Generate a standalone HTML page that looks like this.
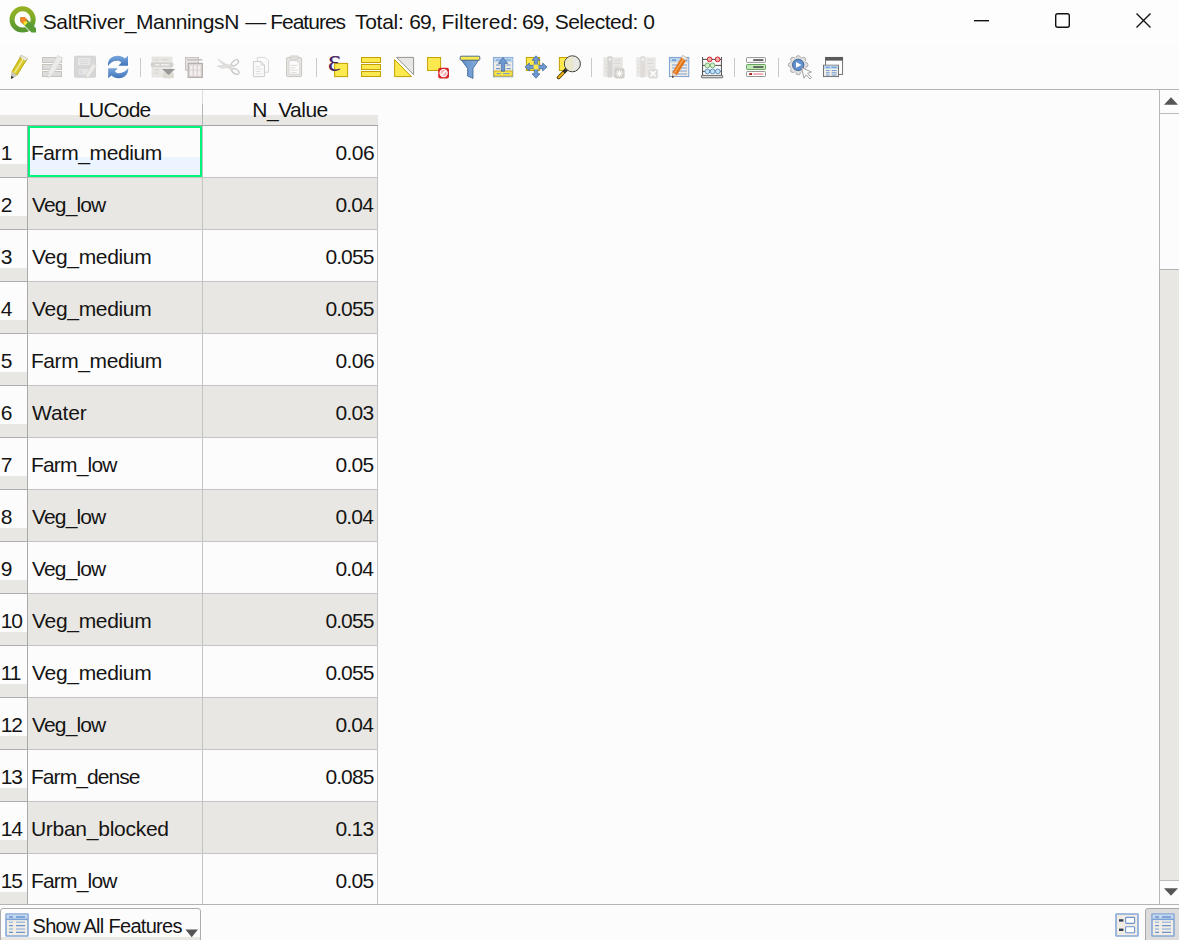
<!DOCTYPE html>
<html lang="en"><head><meta charset="utf-8"><title>SaltRiver_ManningsN</title>
<style>
html,body{margin:0;padding:0;background:#fcfcfc;}
body{width:1179px;height:940px;overflow:hidden;position:relative;font-family:"Liberation Sans",sans-serif;font-size:21px;color:#141414;}
#win{position:absolute;left:0;top:0;width:1179px;height:940px;background:#fcfcfc;overflow:hidden;}
#titlebar{position:absolute;left:0;top:0;width:1179px;height:44px;background:#fdfdfd;}
#title{position:absolute;left:42px;top:7px;width:640px;height:30px;line-height:30px;white-space:nowrap;color:#141414;}
#title span{position:absolute;top:0;}
#toolbar{position:absolute;left:0;top:44px;width:1179px;height:45px;background:#fcfcfc;}
.hline{position:absolute;left:0;width:1179px;height:1px;background:#b4b4b4;}
.ic{position:absolute;}
#table{position:absolute;left:0;top:0;width:1159px;height:904px;overflow:hidden;}
.hdr{position:absolute;top:90px;height:35px;background:linear-gradient(#fcfcfc 0,#fcfcfc 25px,#e9e7e3 25px,#e9e7e3 35px);border-bottom:1px solid #a6a6a6;}
.hdr span{position:absolute;top:5px;line-height:30px;white-space:nowrap;}
.corner{left:0;width:28px;}
.h1{left:28px;width:175px;}
.h1:after{content:"";position:absolute;left:174px;top:0;width:1px;height:35px;background:linear-gradient(#dcdcdc 0,#dcdcdc 14px,#b4b4b4 14px,#b4b4b4 35px);}
.h1 span{left:50.2px;}
.h2{left:203px;width:175px;}
.h2 span{left:49.3px;}
.row{position:absolute;left:0;width:378px;height:52px;}
.row>div{position:absolute;top:0;height:51px;border-bottom:1px solid #c4c4c4;}
.row>.rn{border-bottom-color:#adadad;}
.row span{position:absolute;top:12px;line-height:30px;white-space:nowrap;}
.rn{left:0;width:27px;border-right:1px solid #a9a9a9;background:linear-gradient(#fcfcfc 0,#fcfcfc 38px,#e9e7e3 38px,#e9e7e3 51px);}
.rn span{left:0.8px;letter-spacing:-1.2px;}
.c1{left:28px;width:174px;border-right:1px solid #c4c4c4;background:#fcfcfc;}
.c2{left:203px;width:174px;border-right:1px solid #c4c4c4;background:#fcfcfc;}
.alt .c1,.alt .c2{background:#e9e7e3;}
.c1.sel{background:linear-gradient(#fcfcfc 0,#fcfcfc 31px,#ebf4ff 31px,#ebf4ff 100%);}
.c1.sel:after{content:"";position:absolute;left:0;top:0;width:170px;height:47px;border:2px solid #00f57a;}
#vsb{position:absolute;left:1159px;top:90px;width:20px;height:814px;background:#fcfcfc;border-left:1px solid #b9b9b9;box-sizing:border-box;}
#bottom{position:absolute;left:0;top:905px;width:1179px;height:35px;background:#fcfcfc;}
#thumb{position:absolute;left:-1px;top:179px;width:20px;height:611px;background:#e9e7e3;border-left:1px solid #b4b4b4;border-top:1px solid #b4b4b4;box-sizing:border-box;}
#saf{position:absolute;left:0;top:3px;width:201px;height:40px;box-sizing:border-box;border:1px solid #adadad;border-radius:3px;background:linear-gradient(#fcfcfc 0,#fcfcfc 28px,#e9e7e3 28px);}
#saf span{position:absolute;left:31.5px;top:2px;line-height:30px;white-space:nowrap;}
#tvb{position:absolute;left:1145px;top:3px;width:40px;height:40px;box-sizing:border-box;border:1px solid #a9a9a9;border-radius:3px;background:#dcdcdc;}
.t0{left:2.9px;letter-spacing:-0.4px}
.t1{left:132.4px;letter-spacing:-0.54px}
.t2{left:4.1px;letter-spacing:-0.89px}
.t3{left:132.4px;letter-spacing:-0.81px}
.t4{left:4.1px;letter-spacing:-0.33px}
.t5{left:122.4px;letter-spacing:-0.9px}
.t6{left:4.1px;letter-spacing:-0.13px}
.t7{left:132.4px;letter-spacing:-0.67px}
.t8{left:2.9px;letter-spacing:-0.8px}
.t9{left:132.4px;letter-spacing:-0.67px}
.t10{left:2.9px;letter-spacing:-0.92px}
.t11{left:122.4px;letter-spacing:-0.9px}
.t12{left:2.9px;letter-spacing:-0.26px}
.t13{left:132.4px;letter-spacing:-0.67px}
.h1 span{letter-spacing:-0.8px}.h2 span{letter-spacing:-0.5px}
#saf span{font-size:20px;letter-spacing:-0.7px}
</style></head>
<body>
<div id="win">
<div id="titlebar">
<svg class="ic" style="left:0;top:0" width="1179" height="44" viewBox="0 0 1179 44">
<defs>
<linearGradient id="qg" x1="0" y1="0" x2="0" y2="1"><stop offset="0" stop-color="#93b023"/><stop offset="0.45" stop-color="#7fab28"/><stop offset="0.55" stop-color="#6fa52c"/><stop offset="1" stop-color="#589632"/></linearGradient>
</defs>
<!-- QGIS logo -->
<circle cx="22.6" cy="19.4" r="10.6" fill="none" stroke="url(#qg)" stroke-width="5"/>
<path d="M24.5 26.5 L29 22 L33.5 26.5 L29 31 Z" fill="#fff"/>
<path d="M20.3 17.2 L24.6 17 L36 28.2 L36 32.6 L31.6 32.6 L20.4 21.4 Z" fill="#5a9a32"/>
<path d="M20.3 17.2 L24.6 17 L27.3 19.6 L23.2 24.2 L20.4 21.4 Z" fill="#f0832a"/>
<path d="M23.4 21.6 L26.6 21.2 L27.8 22.4 L25 25.6 L23.6 24.2 Z" fill="#f6e231"/>
<!-- window controls -->
<rect x="974" y="20" width="15" height="1.4" fill="#111"/>
<rect x="1055.7" y="13.7" width="13.6" height="13.6" rx="2" fill="none" stroke="#111" stroke-width="1.4"/>
<path d="M1136.5 13.5 L1150.5 27.5 M1150.5 13.5 L1136.5 27.5" stroke="#111" stroke-width="1.4" fill="none"/>
</svg>
<div id="title"><span style="left:0.7px;letter-spacing:-0.36px">SaltRiver_ManningsN</span> <span style="left:203.3px;letter-spacing:0.0px">—</span> <span style="left:228.2px;letter-spacing:-1.0px">Features</span> <span style="left:313.0px;letter-spacing:-0.28px">Total:</span> <span style="left:367.2px;letter-spacing:-0.9px">69,</span> <span style="left:399.4px;letter-spacing:0.11px">Filtered:</span> <span style="left:479.9px;letter-spacing:-0.8px">69,</span> <span style="left:512.7px;letter-spacing:-0.5px">Selected:</span> <span style="left:601.2px;letter-spacing:0.0px">0</span></div>
</div>
<div id="toolbar">
<svg class="ic" style="left:0;top:0" width="1179" height="45" viewBox="0 44 1179 45">
<defs>
<linearGradient id="bl" x1="0" y1="0" x2="0" y2="1"><stop offset="0" stop-color="#7aa6dc"/><stop offset="1" stop-color="#3f74ba"/></linearGradient>
<linearGradient id="fn" x1="0" y1="0" x2="1" y2="0"><stop offset="0" stop-color="#5c8cc8"/><stop offset="1" stop-color="#8ab0dc"/></linearGradient>
</defs>
<!-- 1 toggle editing pencil -->
<g>
<path d="M21 55 L27.6 58.6 L17.2 75.6 L11 79 L11.6 71.6 Z" fill="#d9c92a"/>
<path d="M21 55 L27.6 58.6 L26 61.2 L19.4 57.6 Z" fill="#ecebe6" stroke="#b9b7b0" stroke-width="0.6"/>
<path d="M14.6 72.6 L23.6 58.4" stroke="#f1eb8c" stroke-width="1.5" fill="none"/><path d="M12.4 71 L21.2 56.6" stroke="#b9a91c" stroke-width="0.9" fill="none"/><path d="M17 75 L26.6 59.6" stroke="#b9a91c" stroke-width="0.9" fill="none"/>
<path d="M11.6 71.6 L17.2 75.6 L11 79 Z" fill="#c8c8c8"/>
<path d="M11.3 75.4 L13.8 77.4 L11 79 Z" fill="#333"/>
</g>
<!-- 2 multi edit (disabled) -->
<g fill="#dcdcdc" stroke="#c9c5bd" stroke-width="1">
<rect x="42.5" y="57.5" width="19" height="5"/><rect x="42.5" y="64.5" width="19" height="5"/><rect x="42.5" y="71.5" width="19" height="5"/>
</g>
<path d="M57.6 55.4 L62.6 58.2 L52.4 75.2 L48 78 L48.2 72.6 Z" fill="#ebebea" stroke="#d6d4d0" stroke-width="0.7"/>
<!-- 3 save edits (disabled) -->
<rect x="74.5" y="56.2" width="21" height="21" rx="1.1" fill="#d7d7d7" stroke="#cdcdcd" stroke-width="0.8"/>
<rect x="78" y="58" width="12.2" height="7" fill="#e9e9e8"/>
<path d="M79.2 59.6 H89 M79.2 61.6 H89 M80 63.6 H88" stroke="#d2d2d2" stroke-width="0.8"/>
<rect x="79" y="69" width="9.6" height="5.6" fill="#e6e6e5"/>
<rect x="80.2" y="70.2" width="2.4" height="3.6" fill="#d8dce2"/>
<path d="M92.6 63.6 L96.4 65.8 L89.4 76.2 L86 78.4 L86.4 74.2 Z" fill="#ecebea" stroke="#dad6d4" stroke-width="0.7"/>
<!-- 4 refresh -->
<g>
<path d="M108 66 C107.4 60 111.4 55.8 117.6 55.8 C120.6 55.8 123 56.8 124.8 58.4 L128 55.8 L128 65.8 L118.4 65.8 L121.4 62.6 C120.4 61.4 119 60.8 117.4 60.8 C113.4 60.8 110.4 62.6 108 66 Z" fill="url(#bl)"/>
<path d="M128.2 68 C128.8 74 124.8 78.2 118.6 78.2 C115.6 78.2 113.2 77.2 111.4 75.6 L108.2 78.2 L108.2 68.2 L117.8 68.2 L114.8 71.4 C115.8 72.6 117.2 73.2 118.8 73.2 C122.8 73.2 125.8 71.4 128.2 68 Z" fill="url(#bl)"/>
</g>
<!-- sep -->
<rect x="140" y="58" width="1" height="19" fill="#c9c9c9"/>
<!-- 5 add feature (disabled) -->
<rect x="152" y="57" width="20" height="20" fill="#e8e7e4" stroke="#dddcd8" stroke-width="0.6"/>
<path d="M154.6 59.6 H158.8 M161 59.6 H169 M154.6 70 H158.8 M154.6 73.4 H158.8" stroke="#d8d7d4" stroke-width="1.4"/>
<rect x="150.8" y="62.6" width="22.6" height="4.4" rx="1.4" fill="#d2d1ce"/>
<path d="M155 64.8 H159.6 M161 64.8 H169.4" stroke="#f6f6f6" stroke-width="1.2"/>
<rect x="163.2" y="72.4" width="10.6" height="5.8" rx="1" fill="#dcdad2"/>
<path d="M162 69 L175.2 69 L168.6 74.9 Z" fill="#989896"/>
<!-- 6 delete (disabled) -->
<rect x="185.4" y="57.4" width="13.2" height="12.8" fill="#e6e5e2" stroke="#bdb5b3" stroke-width="0.8"/>
<rect x="187" y="59" width="15.4" height="1.6" fill="#c9c1bf"/>
<rect x="188.2" y="63.4" width="14.2" height="14" fill="#dcd5d4" stroke="#b5afad" stroke-width="1.2"/>
<path d="M191.3 65.4 V75.8 M195.3 65.4 V75.8 M199.3 65.4 V75.8" stroke="#f3f1f0" stroke-width="2.4"/>
<rect x="188.2" y="69.6" width="14.2" height="0.9" fill="#cfc8c7" opacity="0.7"/>
<!-- 7 cut (disabled) -->
<g fill="none" stroke="#c9c7c5" stroke-width="1.3">
<ellipse cx="235" cy="62.8" rx="4" ry="2.3" transform="rotate(-38 235 62.8)"/>
<ellipse cx="235.4" cy="71.4" rx="4" ry="2.3" transform="rotate(32 235.4 71.4)"/>
</g>
<path d="M218 59 L232.4 68.6 L231 70 L221 62.6 Z" fill="#e1e0de" stroke="#cfcdcb" stroke-width="0.6"/>
<path d="M217.2 66 L231.6 64.6 L232.4 66.4 L222 68.4 Z" fill="#e6e5e3" stroke="#cfcdcb" stroke-width="0.6"/>
<!-- 8 copy (disabled) -->
<path d="M257.4 57.4 H265 L268.6 61 V72.2 H257.4 Z" fill="#fbfbfb" stroke="#d3d3d3" stroke-width="0.9"/>
<path d="M253.4 61.6 H261 L264.4 65 V76.6 H253.4 Z" fill="#fbfbfb" stroke="#cbcbcb" stroke-width="1"/>
<path d="M261 61.6 V65 H264.4" fill="none" stroke="#cbcbcb" stroke-width="0.8"/>
<path d="M255.4 66.6 H260 M255.4 69 H262.4 M255.4 71.4 H260.6 M255.4 73.8 H262.4" stroke="#dcdcdc" stroke-width="0.9"/>
<!-- 9 paste (disabled) -->
<rect x="286.6" y="57.6" width="15" height="19" rx="1.2" fill="#e9e7e3" stroke="#c6c4c0" stroke-width="1"/>
<rect x="290" y="55.8" width="8.4" height="4.2" rx="1" fill="#e0deda" stroke="#cfcdc9" stroke-width="0.6"/>
<path d="M289 60.6 H296.6 L299.6 63.4 V74.4 H289 Z" fill="#fbfbfb" stroke="#cfcdc9" stroke-width="0.8"/>
<path d="M290.6 65.4 H297.6 M290.6 67.8 H295 M290.6 70.2 H297.6 M290.6 72.6 H296.6" stroke="#dad8d4" stroke-width="0.9"/>
<!-- sep -->
<rect x="316" y="58" width="1" height="19" fill="#c9c9c9"/>
<!-- 10 select by expression -->
<rect x="334.6" y="63.4" width="13" height="13.2" fill="#fce94f" stroke="#c4a000" stroke-width="1"/>
<text x="327.8" y="71.2" font-family="'Liberation Serif','DejaVu Serif',serif" font-size="31" fill="#4a2560">ε</text>
<!-- 11 select all -->
<g fill="#fce94f" stroke="#c4a000" stroke-width="1">
<rect x="361.5" y="57.5" width="19" height="5"/><rect x="361.5" y="64.5" width="19" height="5"/><rect x="361.5" y="71.5" width="19" height="5"/>
</g>
<!-- 12 invert -->
<path d="M394.6 59.6 L411.4 76.6 H394.6 Z" fill="#fce94f" stroke="#c4a000" stroke-width="1"/>
<path d="M396.6 57.4 H413.6 V74.6 Z" fill="#e9e7e3" stroke="#888a85" stroke-width="0.9"/>
<!-- 13 deselect -->
<rect x="427.6" y="57.5" width="13" height="13" fill="#fce94f" stroke="#c4a000" stroke-width="1"/>
<rect x="438.2" y="67.8" width="10.8" height="10.6" rx="2" fill="#d8232a"/>
<circle cx="443.6" cy="73.1" r="3.6" fill="#f3b0b0" stroke="#fff" stroke-width="1.2"/>
<path d="M441.2 75.6 L446 70.6" stroke="#fff" stroke-width="1.5"/>
<!-- 14 filter -->
<path d="M461.4 60 H478.6 L473 68.4 V78.4 L467.6 76 V68.4 Z" fill="url(#fn)" stroke="#3b5f92" stroke-width="0.8"/>
<rect x="460.2" y="56.2" width="19.6" height="4" rx="0.8" fill="#fce94f" stroke="#3b5f92" stroke-width="0.9"/>
<!-- 15 move selection to top -->
<rect x="493.4" y="57.4" width="19.4" height="19.4" fill="#f1ede5" stroke="#7da2d6" stroke-width="0.9"/>
<rect x="494" y="58" width="18.2" height="4.2" fill="#bcd6f0"/>
<path d="M496 60 H501 M505.6 60 H510.6 M496 65 H500 M506.4 65 H510.6 M496 68.6 H500 M506.4 68.6 H510.6" stroke="#6d98d2" stroke-width="1.1"/>
<rect x="494" y="71" width="18.2" height="5" fill="#fce94f" stroke="#c4a000" stroke-width="0.8"/>
<path d="M496.4 73.6 H501 M503 73.6 H510" stroke="#6d98d2" stroke-width="1"/>
<path d="M503 57.6 L507.6 63.4 H504.7 V71.2 H501.3 V63.4 H498.4 Z" fill="#6d98d2" stroke="#3e639a" stroke-width="0.7"/>
<!-- 16 pan to selected -->
<rect x="526.4" y="57.5" width="13.2" height="13" fill="#fce94f" stroke="#c4a000" stroke-width="1"/>
<path d="M536 55.8 L540 60.2 H537.7 V65.3 H542.6 V63 L547 67 L542.6 71 V68.7 H537.7 V73.8 H540 L536 78.2 L532 73.8 H534.3 V68.7 H529.4 V71 L525 67 L529.4 63 V65.3 H534.3 V60.2 H532 Z" fill="#6d98d2" stroke="#3e639a" stroke-width="0.7"/>
<rect x="533.6" y="64.6" width="4.8" height="4.8" fill="#fce94f"/>
<!-- 17 zoom to selected -->
<rect x="559.4" y="57.5" width="13" height="13" fill="#fce94f" stroke="#c4a000" stroke-width="1"/>
<path d="M566.4 69.6 L558.6 77.4" stroke="#4a3a10" stroke-width="3.6" stroke-linecap="round"/>
<path d="M565.8 70.2 L558.8 77.2" stroke="#eeb211" stroke-width="2" stroke-linecap="round"/>
<path d="M566.6 69.4 L563.6 72.4" stroke="#2e2e2e" stroke-width="3.4"/>
<circle cx="572.4" cy="63.8" r="8" fill="#e8e7e0" fill-opacity="0.94" stroke="#3c3c3c" stroke-width="1"/>
<path d="M572.4 56.4 A7.4 7.4 0 0 0 572.4 71.2 Z" fill="#ebe8c8" fill-opacity="0.9"/>
<!-- sep -->
<rect x="591" y="58" width="1" height="19" fill="#c9c9c9"/>
<!-- 18 new field (disabled) -->
<rect x="603.4" y="57.2" width="19.4" height="19.6" fill="#e8e7e4"/>
<path d="M614 59.8 H620.6 M614 63.4 H620.6 M614 67 H620.6 M605 61 H606.6 M605 64.6 H606.6 M605 68.2 H606.6 M605 71.8 H606.6" stroke="#dad9d6" stroke-width="1.2"/>
<rect x="607.4" y="56.2" width="5" height="21.4" rx="0.8" fill="#d5d4d2"/>
<rect x="609" y="58.6" width="1.8" height="1.8" fill="#fff"/>
<rect x="614.2" y="68.2" width="10.4" height="10.2" rx="1.8" fill="#d0cec8"/>
<path d="M619.4 69.6 V77 M615.6 73.3 H623.2 M616.8 70.8 L622 75.8 M622 70.8 L616.8 75.8" stroke="#fbfbfb" stroke-width="1.1"/>
<!-- 19 delete field (disabled) -->
<rect x="636.2" y="57.2" width="19.6" height="19.6" fill="#ebe9e7"/>
<path d="M647 59.8 H653.6 M647 63.4 H653.6 M647 67 H653.6 M637.8 61 H639.4 M637.8 64.6 H639.4 M637.8 68.2 H639.4 M637.8 71.8 H639.4" stroke="#dddbd9" stroke-width="1.2"/>
<rect x="640.2" y="56.2" width="5" height="21.4" rx="0.8" fill="#e0dcda"/>
<rect x="641.8" y="58.6" width="1.8" height="1.8" fill="#fff"/>
<rect x="648.4" y="69" width="9.4" height="9.4" rx="1.6" fill="#dcdad6"/>
<path d="M650.4 71 L655.8 76.4 M655.8 71 L650.4 76.4" stroke="#fbfbfb" stroke-width="1.8"/>
<!-- 20 field calculator -->
<rect x="669.4" y="57.4" width="19.4" height="19.2" fill="#f1ede5" stroke="#6d98d2" stroke-width="0.9"/>
<rect x="670" y="58" width="18.2" height="4.4" fill="#bcd6f0"/>
<path d="M672 60.2 H676 M683.6 60.2 H687" stroke="#5a88c8" stroke-width="1.3"/>
<path d="M672 65 H687 M672 68 H687 M672 71 H687 M672 74 H687" stroke="#6d98d2" stroke-width="0.9"/>
<path d="M682.6 55.2 L687.4 58.2 L677 75 L672.2 78 L672.4 72.4 Z" fill="#e2741a"/>
<path d="M674.6 72.8 L684.6 57" stroke="#f6a85a" stroke-width="1.3"/>
<path d="M682.6 55.2 L687.4 58.2 L686 60.4 L681.2 57.4 Z" fill="#ecebe7" stroke="#b5b3ad" stroke-width="0.5"/>
<path d="M672.4 72.4 L677 75 L672.2 78 Z" fill="#d9d7d2"/>
<path d="M672.3 75.6 L674.2 76.8 L672.2 78 Z" fill="#222"/>
<!-- 21 abacus -->
<path d="M702.6 57 V75.4 M721.4 57 V75.4 M702.6 59.4 H721.4 M702.6 65.4 H721.4 M702.6 71.4 H721.4" stroke="#4d4d4d" stroke-width="1" fill="none"/>
<rect x="701.4" y="75.4" width="21.4" height="2.4" rx="0.6" fill="#d8d8d8" stroke="#4d4d4d" stroke-width="0.8"/>
<g stroke-width="0.9">
<circle cx="709.6" cy="59.4" r="2.4" fill="#f5a9a9" stroke="#c4161c"/><circle cx="717.6" cy="59.4" r="2.4" fill="#f5a9a9" stroke="#c4161c"/>
<circle cx="707.4" cy="65.4" r="2.4" fill="#d2f0cc" stroke="#6cab64"/><circle cx="712.6" cy="65.4" r="2.4" fill="#d2f0cc" stroke="#6cab64"/>
<circle cx="707.4" cy="71.4" r="2.4" fill="#c6e0f6" stroke="#4f86b8"/><circle cx="712.6" cy="71.4" r="2.4" fill="#c6e0f6" stroke="#4f86b8"/><circle cx="717.8" cy="71.4" r="2.4" fill="#c6e0f6" stroke="#4f86b8"/>
</g>
<!-- sep -->
<rect x="734" y="58" width="1" height="19" fill="#c9c9c9"/>
<!-- 22 conditional formatting -->
<rect x="746.5" y="57.6" width="19" height="4.8" rx="0.8" fill="#fdfdfd" stroke="#8a8a8a" stroke-width="0.9"/>
<rect x="753.2" y="59.2" width="10.2" height="1.7" fill="#555"/>
<rect x="746.5" y="64.5" width="19" height="5" rx="0.8" fill="#bfeab6" stroke="#5b9a52" stroke-width="0.9"/>
<rect x="753.2" y="66.2" width="10.2" height="1.7" fill="#555"/>
<rect x="746.5" y="71.5" width="19" height="5" rx="0.8" fill="#fdfdfd" stroke="#8a8a8a" stroke-width="0.9"/>
<rect x="749.2" y="73.2" width="2.8" height="1.7" fill="#a40000"/><rect x="753.2" y="73.2" width="10" height="1.7" fill="#f4a6ae"/>
<!-- sep -->
<rect x="778" y="58" width="1" height="19" fill="#c9c9c9"/>
<!-- 23 actions -->
<g fill="#e0e0e0" stroke="#9c9c9c" stroke-width="0.8">
<circle cx="798.2" cy="58" r="2.35"/><circle cx="803.5" cy="59.6" r="2.35"/><circle cx="805.7" cy="64.9" r="2.35"/><circle cx="803.5" cy="70.2" r="2.35"/><circle cx="798.2" cy="72.4" r="2.35"/><circle cx="792.9" cy="70.2" r="2.35"/><circle cx="790.7" cy="64.9" r="2.35"/><circle cx="792.9" cy="59.6" r="2.35"/>
</g>
<circle cx="798.2" cy="65.1" r="7.6" fill="#e0e0e0"/>
<circle cx="798.2" cy="64.9" r="5.7" fill="#5f8fcc" stroke="#3d5f8e" stroke-width="0.9"/>
<path d="M796 62 L801.6 64.9 L796 67.8 Z" fill="#fff"/>
<path d="M801.6 67.6 L811.4 72 L807.6 73.4 L811.6 77.6 L810 79 L806.2 74.8 L804 78.2 Z" fill="#fdfdfd" stroke="#8c8c8c" stroke-width="0.8"/>
<!-- 24 dock -->
<rect x="825.6" y="57.4" width="17" height="17" fill="#fdfdfd" stroke="#666" stroke-width="0.9"/>
<rect x="825.2" y="57" width="17.8" height="3.6" fill="#5a5a5a"/>
<rect x="823.5" y="65.2" width="15" height="11.4" fill="#f1ede5" stroke="#666" stroke-width="0.9"/>
<rect x="824" y="65.7" width="14" height="3.2" fill="#bcd6f0"/>
<path d="M826 67.3 H829.6 M831.6 67.3 H836.6 M826 70.6 H829.6 M831.6 70.6 H836.6 M826 72.8 H829.6 M831.6 72.8 H836.6 M826 75 H829.6 M831.6 75 H836.6" stroke="#5a8cd0" stroke-width="0.9"/>
</svg>
</div>
<div class="hline" style="top:89px"></div>
<div id="table">
<div class="hdr corner"></div><div class="hdr h1"><span>LUCode</span></div><div class="hdr h2"><span>N_Value</span></div>
<div class="row" style="top:126px"><div class="rn"><span>1</span></div><div class="c1 sel"><span class="t0">Farm_medium</span></div><div class="c2"><span class="t1">0.06</span></div></div>
<div class="row alt" style="top:178px"><div class="rn"><span>2</span></div><div class="c1"><span class="t2">Veg_low</span></div><div class="c2"><span class="t3">0.04</span></div></div>
<div class="row" style="top:230px"><div class="rn"><span>3</span></div><div class="c1"><span class="t4">Veg_medium</span></div><div class="c2"><span class="t5">0.055</span></div></div>
<div class="row alt" style="top:282px"><div class="rn"><span>4</span></div><div class="c1"><span class="t4">Veg_medium</span></div><div class="c2"><span class="t5">0.055</span></div></div>
<div class="row" style="top:334px"><div class="rn"><span>5</span></div><div class="c1"><span class="t0">Farm_medium</span></div><div class="c2"><span class="t1">0.06</span></div></div>
<div class="row alt" style="top:386px"><div class="rn"><span>6</span></div><div class="c1"><span class="t6">Water</span></div><div class="c2"><span class="t7">0.03</span></div></div>
<div class="row" style="top:438px"><div class="rn"><span>7</span></div><div class="c1"><span class="t8">Farm_low</span></div><div class="c2"><span class="t9">0.05</span></div></div>
<div class="row alt" style="top:490px"><div class="rn"><span>8</span></div><div class="c1"><span class="t2">Veg_low</span></div><div class="c2"><span class="t3">0.04</span></div></div>
<div class="row" style="top:542px"><div class="rn"><span>9</span></div><div class="c1"><span class="t2">Veg_low</span></div><div class="c2"><span class="t3">0.04</span></div></div>
<div class="row alt" style="top:594px"><div class="rn"><span>10</span></div><div class="c1"><span class="t4">Veg_medium</span></div><div class="c2"><span class="t5">0.055</span></div></div>
<div class="row" style="top:646px"><div class="rn"><span>11</span></div><div class="c1"><span class="t4">Veg_medium</span></div><div class="c2"><span class="t5">0.055</span></div></div>
<div class="row alt" style="top:698px"><div class="rn"><span>12</span></div><div class="c1"><span class="t2">Veg_low</span></div><div class="c2"><span class="t3">0.04</span></div></div>
<div class="row" style="top:750px"><div class="rn"><span>13</span></div><div class="c1"><span class="t10">Farm_dense</span></div><div class="c2"><span class="t11">0.085</span></div></div>
<div class="row alt" style="top:802px"><div class="rn"><span>14</span></div><div class="c1"><span class="t12">Urban_blocked</span></div><div class="c2"><span class="t13">0.13</span></div></div>
<div class="row last" style="top:854px"><div class="rn"><span>15</span></div><div class="c1"><span class="t8">Farm_low</span></div><div class="c2"><span class="t9">0.05</span></div></div>
</div>
<div id="vsb">
<div id="thumb"></div>
<svg class="ic" style="left:0;top:0" width="19" height="814" viewBox="1160 90 19 814">
<rect x="1160" y="113" width="19" height="1" fill="#bcbcbc"/>
<rect x="1160" y="880" width="19" height="1" fill="#bcbcbc"/>
<path d="M1171 97.2 L1178 104.8 H1164 Z" fill="#555"/>
<path d="M1164 888.2 H1178 L1171 895.8 Z" fill="#555"/>
</svg>
</div>
<div class="hline" style="top:904px"></div>
<div id="bottom">
<div id="saf"><span>Show All Features</span></div>
<div id="tvb"></div>
<svg class="ic" style="left:0;top:0" width="1179" height="35" viewBox="0 905 1179 35">
<!-- show-all table icon -->
<g>
<rect x="6" y="914" width="22" height="22" rx="0.6" fill="#f1ede5" stroke="#86a8d8" stroke-width="1.6"/>
<rect x="6.8" y="914.8" width="20.4" height="4.6" fill="#c4daf2"/>
<rect x="6" y="918.6" width="22" height="1.5" fill="#7ea2d4"/>
<path d="M9 917 H13 M16 917 H25" stroke="#6b94cf" stroke-width="1.7"/>
<path d="M9 922.2 H13 M16 922.2 H25 M9 929 H13 M16 929 H25" stroke="#a8c0e0" stroke-width="1.4"/>
<path d="M9 925.6 H13 M16 925.6 H25 M9 932.4 H13 M16 932.4 H25" stroke="#6b94cf" stroke-width="1.2"/>
</g>
<path d="M185.4 929.6 H198 L191.7 937.2 Z" fill="#555"/>
<!-- form view icon -->
<rect x="1116" y="914" width="22" height="22" rx="0.6" fill="#f1ede5" stroke="#86a8d8" stroke-width="1.6"/>
<rect x="1119" y="919.2" width="4.4" height="2.4" fill="#2e3e55"/>
<rect x="1119" y="928.6" width="4.4" height="2.4" fill="#2e3e55"/>
<rect x="1125.6" y="917.4" width="9" height="6" rx="0.8" fill="#fff" stroke="#6b94cf" stroke-width="1.1"/>
<rect x="1125.6" y="926.8" width="9" height="6" rx="0.8" fill="#fff" stroke="#6b94cf" stroke-width="1.1"/>
<!-- table view icon -->
<g>
<rect x="1152" y="914" width="22" height="22" rx="0.6" fill="#f1ede5" stroke="#86a8d8" stroke-width="1.6"/>
<rect x="1152.8" y="914.8" width="20.4" height="4.6" fill="#c4daf2"/>
<rect x="1152" y="918.6" width="22" height="1.5" fill="#7ea2d4"/>
<path d="M1155 917 H1159 M1162 917 H1171" stroke="#6b94cf" stroke-width="1.7"/>
<path d="M1155 922.2 H1159 M1162 922.2 H1171 M1155 929 H1159 M1162 929 H1171" stroke="#a8c0e0" stroke-width="1.4"/>
<path d="M1155 925.6 H1159 M1162 925.6 H1171 M1155 932.4 H1159 M1162 932.4 H1171" stroke="#6b94cf" stroke-width="1.2"/>
</g>
</svg>
</div>
</div>
</body></html>
